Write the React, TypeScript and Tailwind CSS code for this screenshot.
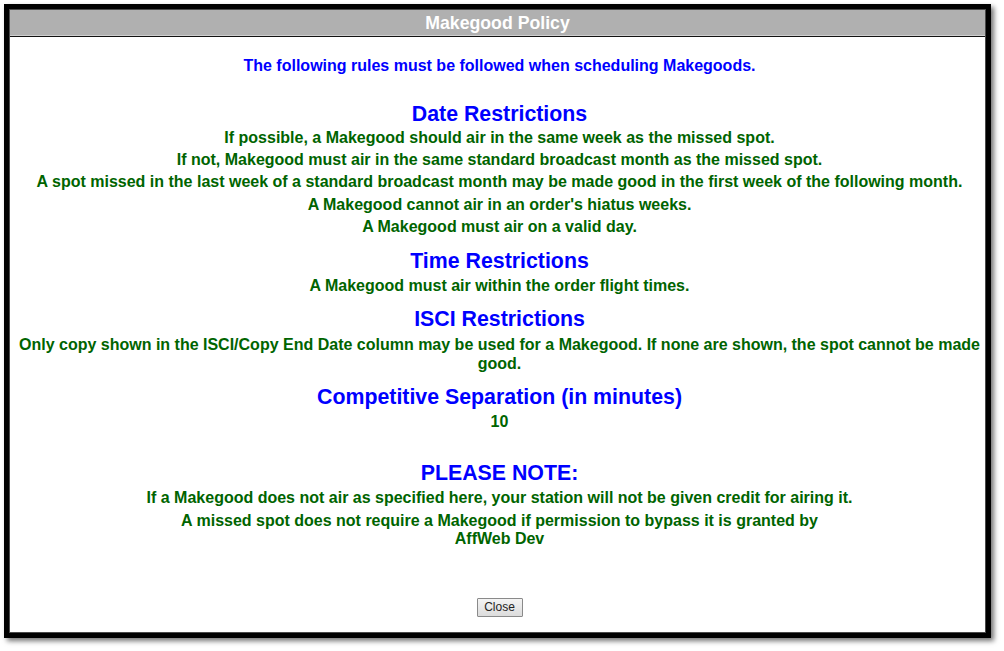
import React from "react";

const green = "text-[#006400]";

function Heading({ children, className = "" }: { children: React.ReactNode; className?: string }) {
  return (
    <div className={`text-[21.33px] leading-[24.5px] font-bold text-[#0000ff] ${className}`}>{children}</div>
  );
}

function Line({ children, className = "" }: { children: React.ReactNode; className?: string }) {
  return <div className={`text-[16px] leading-[18.4px] font-bold ${green} ${className}`}>{children}</div>;
}

export default function App() {
  return (
    <div className="w-[1004px] h-[651px] bg-white pt-[4px] pl-[4px]" style={{ fontFamily: '"Liberation Sans", Arial, sans-serif' }}>
      <div className="w-[987px] h-[634px] border-[5px] border-black bg-black shadow-[3px_3px_5px_rgba(0,0,0,0.55)]">
        <div className="w-full h-full border border-[#4a4a4a] bg-white flex flex-col">
          <div className="h-[27px] shrink-0 bg-[#b0b0b0] border-b border-[#111] shadow-[inset_0_-1px_0_#cfcfcf] flex items-center justify-center">
            <span className="text-white font-bold text-[17.7px] leading-[20px]">Makegood Policy</span>
          </div>
          <div className="flex flex-col items-center text-center pl-[6px] pr-[2px]">
            <div className="mt-[20px] text-[16px] leading-[18.4px] font-bold text-[#0000ff]">
              The following rules must be followed when scheduling Makegoods.
            </div>

            <Heading className="mt-[26.5px]">Date Restrictions</Heading>
            <Line className="mt-[2.5px]">If possible, a Makegood should air in the same week as the missed spot.</Line>
            <Line className="mt-[3.85px]">If not, Makegood must air in the same standard broadcast month as the missed spot.</Line>
            <Line className="mt-[3.85px]">A spot missed in the last week of a standard broadcast month may be made good in the first week of the following month.</Line>
            <Line className="mt-[3.85px]">A Makegood cannot air in an order's hiatus weeks.</Line>
            <Line className="mt-[3.85px]">A Makegood must air on a valid day.</Line>

            <Heading className="mt-[12.5px]">Time Restrictions</Heading>
            <Line className="mt-[3.5px]">A Makegood must air within the order flight times.</Line>

            <Heading className="mt-[11.5px]">ISCI Restrictions</Heading>
            <Line className="mt-[3.5px] leading-[19px]">
              Only copy shown in the ISCI/Copy End Date column may be used for a Makegood. If none are shown, the spot cannot be made good.
            </Line>

            <Heading className="mt-[12.25px]">Competitive Separation (in minutes)</Heading>
            <Line className="mt-[3.5px]">10</Line>

            <Heading className="mt-[29.5px]">PLEASE NOTE:</Heading>
            <Line className="mt-[3.5px]">If a Makegood does not air as specified here, your station will not be given credit for airing it.</Line>
            <Line className="mt-[4.6px] w-[660px] leading-[18px]">
              A missed spot does not require a Makegood if permission to bypass it is granted by AffWeb Dev
            </Line>

            <button className="mt-[50px] h-[19px] w-[46px] border border-[#8a8a8a] bg-gradient-to-b from-[#f4f4f4] to-[#dcdcdc] text-[12px] leading-[15px] text-[#222] rounded-[1px]">
              Close
            </button>
          </div>
        </div>
      </div>
    </div>
  );
}
